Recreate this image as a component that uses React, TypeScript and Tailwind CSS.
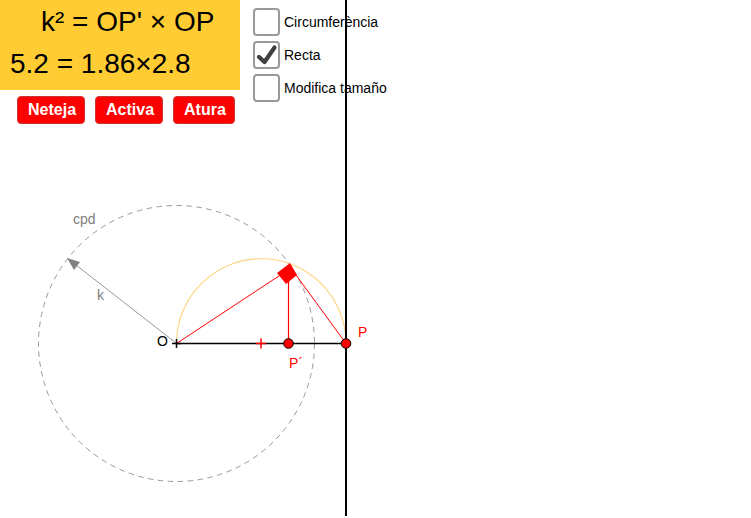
const options = [
  { label: 'Circumferència', checked: false },
  { label: 'Recta', checked: true },
  { label: 'Modifica tamaño', checked: false },
];

function CheckMark() {
  return (
    <svg width="23" height="24" viewBox="0 0 23 24" fill="none">
      <path d="M4 14 L9.5 19 L19.5 4.5" stroke="#404040" strokeWidth="4.2" strokeLinecap="round" strokeLinejoin="round" />
    </svg>
  );
}

function Construction() {
  return (
    <svg className="absolute inset-0" width="751" height="518" viewBox="0 0 751 518" fill="none">
      {/* circle of inversion */}
      <circle cx="176.5" cy="343.5" r="138" stroke="#8c8c8c" strokeWidth="0.9" strokeDasharray="5.5 4.5" />
      {/* radius k */}
      <line x1="176" y1="343" x2="76" y2="265" stroke="#8c8c8c" strokeWidth="0.9" />
      <polygon points="67,258 80,262 74,270" fill="#808080" />
      {/* semicircle */}
      <path d="M176.5 343.5 A84.75 84.75 0 0 1 346 343.5" stroke="#FFD27F" strokeWidth="1.1" />
      {/* axis */}
      <line x1="176" y1="343.5" x2="346" y2="343.5" stroke="#000" strokeWidth="1.3" />
      <line x1="346" y1="0" x2="346" y2="516" stroke="#000" strokeWidth="2" />
      {/* triangle */}
      <line x1="176.5" y1="343.5" x2="288" y2="270" stroke="#FF0000" strokeWidth="1" />
      <line x1="296" y1="275" x2="346" y2="343.5" stroke="#FF0000" strokeWidth="1" />
      <line x1="288.5" y1="275" x2="288.5" y2="343" stroke="#FF0000" strokeWidth="1.2" />
      <polygon points="277,273 290,263 297,275 286,284" fill="#FF0000" />
      {/* midpoint tick */}
      <line x1="256" y1="343.5" x2="266" y2="343.5" stroke="#FF0000" strokeWidth="1.5" />
      <line x1="261" y1="338.5" x2="261" y2="348.5" stroke="#FF0000" strokeWidth="1.5" />
      {/* origin */}
      <line x1="172" y1="343.5" x2="181" y2="343.5" stroke="#000" strokeWidth="1.5" />
      <line x1="176.5" y1="339" x2="176.5" y2="348" stroke="#000" strokeWidth="1.5" />
      {/* points */}
      <circle cx="288.5" cy="343.5" r="4.8" fill="#FF0000" stroke="#000" strokeWidth="1" />
      <circle cx="346" cy="343.5" r="4.8" fill="#FF0000" stroke="#000" strokeWidth="1" />
    </svg>
  );
}

export default function App() {
  return (
    <div className="relative h-[518px] w-[751px] overflow-hidden bg-white font-['Liberation_Sans',Arial,sans-serif] text-black">
      <div className="flex">
        <div className="w-[240px]">
          <div className="h-[90px] bg-[#FFCC33] text-[28px] leading-[32px]">
            <div className="pl-[41px] pt-[6px]">k² = OP' × OP</div>
            <div className="pl-[10px] pt-[10px]">5.2 = 1.86×2.8</div>
          </div>
          <div className="mt-[6px] flex gap-[10px] pl-[17px]">
            {['Neteja', 'Activa', 'Atura'].map((name) => (
              <button
                key={name}
                className="h-[28px] rounded-[4px] border border-[#CC3333] bg-[#FF0000] pl-[10px] pr-[8px] text-[16px] font-bold text-white"
              >
                {name}
              </button>
            ))}
          </div>
        </div>
        <div className="ml-[13px] flex flex-col gap-[5px] pt-[8px]">
          {options.map((opt) => (
            <div key={opt.label} className="flex items-center gap-[4px]">
              <div className="flex h-[28px] w-[27px] items-center justify-center rounded-[4px] border-2 border-[#999999] bg-white">
                {opt.checked && <CheckMark />}
              </div>
              <span className="text-[14px] leading-[16px]">{opt.label}</span>
            </div>
          ))}
        </div>
      </div>
      <Construction />
      <span className="absolute left-[73px] top-[211px] text-[14px] leading-[16px] text-[#808080]">cpd</span>
      <span className="absolute left-[97px] top-[287px] text-[14px] leading-[16px] text-[#808080]">k</span>
      <span className="absolute left-[157px] top-[333px] text-[14px] leading-[16px]">O</span>
      <span className="absolute left-[358px] top-[324px] text-[14px] leading-[16px] text-[#FF0000]">P</span>
      <span className="absolute left-[289px] top-[355px] text-[14px] leading-[16px] text-[#FF0000]">P´</span>
    </div>
  );
}
